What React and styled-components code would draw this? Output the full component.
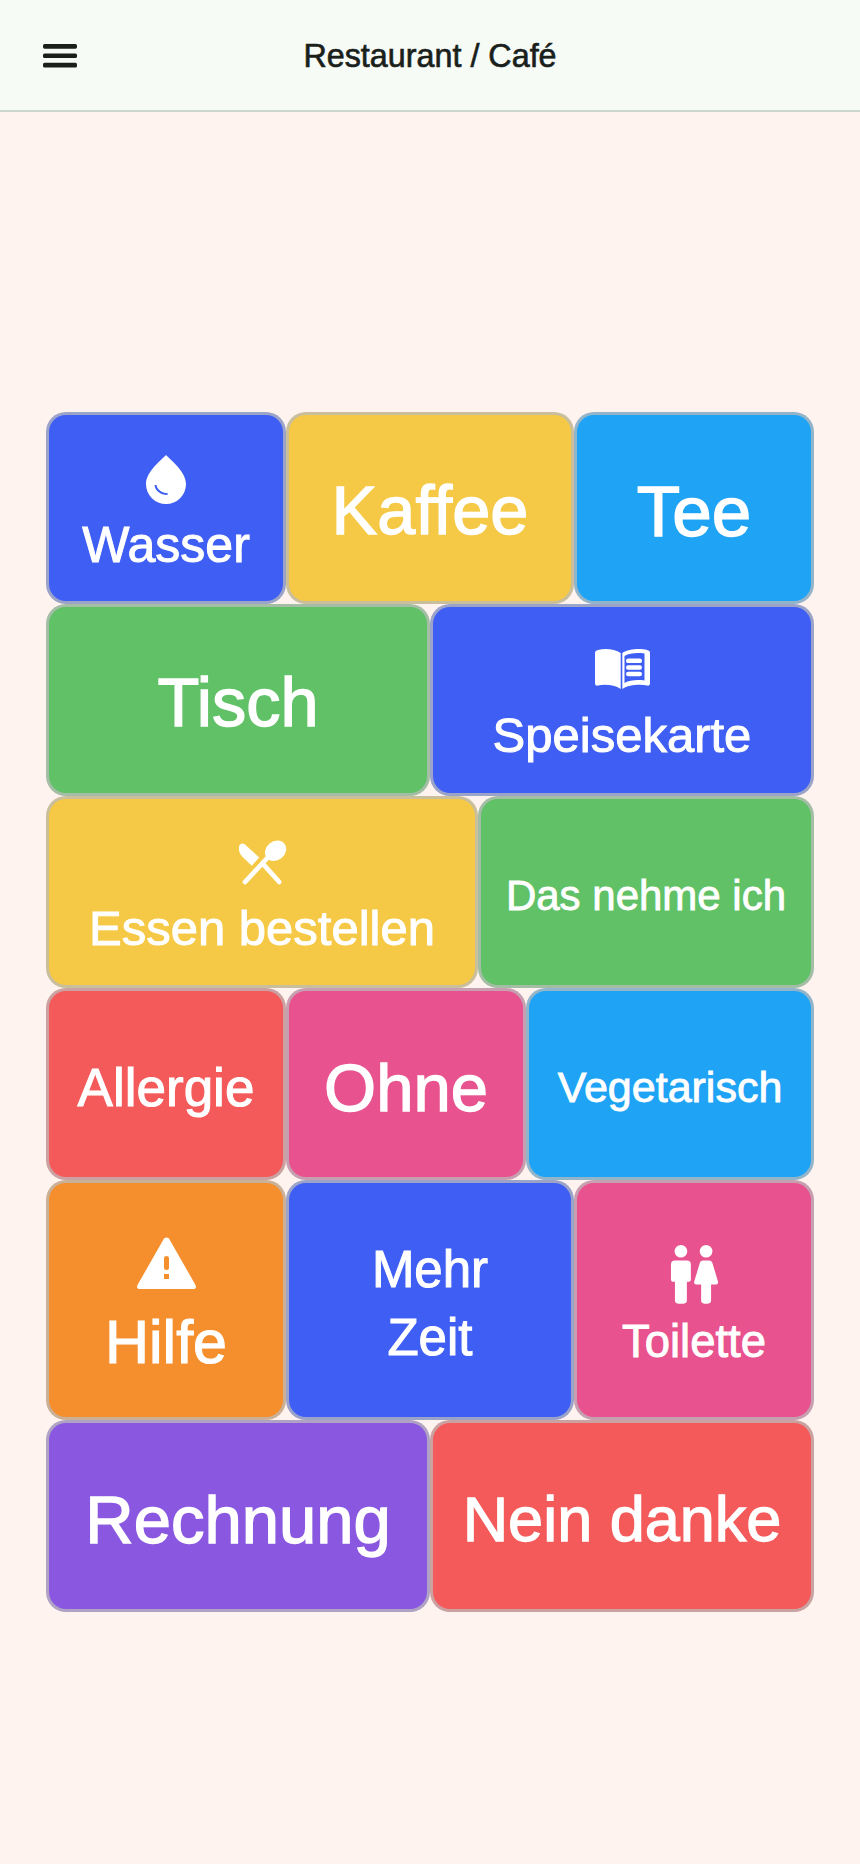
import React from 'react'
import styled, { createGlobalStyle } from 'styled-components'

const GlobalStyle = createGlobalStyle`
  html, body {
    margin: 0;
    padding: 0;
    background: #fff3ef;
    font-family: "Liberation Sans", Arial, sans-serif;
  }
`

const Page = styled.div`
  width: 860px;
  height: 1864px;
  display: flex;
  flex-direction: column;
  background: #fff3ef;
`

const Header = styled.header`
  height: 110px;
  flex-shrink: 0;
  display: flex;
  align-items: center;
  justify-content: center;
  position: relative;
  background: #f6fbf6;
  border-bottom: 2px solid #cdd5d1;
`

const MenuButton = styled.button`
  position: absolute;
  left: 43px;
  top: 44px;
  padding: 0;
  border: none;
  background: none;
  color: #1a1f1c;
  display: flex;
`

const Title = styled.h1`
  margin: 3px 0 0;
  font-size: 32.3px;
  font-weight: 400;
  color: #1a1f1c;
  -webkit-text-stroke: 0.02em currentColor;
`

const Main = styled.main`
  flex: 1;
  padding-top: 48px;
  display: flex;
  align-items: center;
  justify-content: center;
`

const Board = styled.div`
  display: grid;
  grid-template-columns: repeat(16, 48px);
  grid-template-rows: repeat(4, 192px) 240px 192px;
`

const Tile = styled.button`
  grid-column: span ${(p) => p.$span};
  display: flex;
  flex-direction: column;
  align-items: center;
  justify-content: center;
  padding: ${(p) => (p.$hasIcon ? 8 : 7)}px 0 0;
  border: 3px solid rgba(187, 187, 187, 0.75);
  border-radius: 20px;
  background: ${(p) => p.$bg};
  color: #fff;
  font-family: inherit;
  font-size: ${(p) => p.$size}px;
  line-height: ${(p) => p.$leading || '1'};
  text-align: center;
  -webkit-text-stroke: 0.02em currentColor;
`

const IconSlot = styled.span`
  display: flex;
  margin-bottom: ${(p) => p.$gap}px;
  -webkit-text-stroke: 0;
`

const blue = '#3f5ef3'
const yellow = '#f5c945'
const sky = '#1fa3f5'
const green = '#60c166'
const red = '#f55a5a'
const pink = '#e8528e'
const orange = '#f58e2c'
const purple = '#8a58e0'

function MenuIcon() {
  return (
    <svg width="34" height="24" viewBox="0 0 34 24" fill="currentColor">
      <rect y="0" width="34" height="4.7" rx="1.6" />
      <rect y="9.4" width="34" height="4.7" rx="1.6" />
      <rect y="18.8" width="34" height="4.7" rx="1.6" />
    </svg>
  )
}

function DropIcon() {
  return (
    <svg width="40" height="49" viewBox="0 0 40 49" fill="currentColor" fillRule="evenodd">
      <path d="M20 0C14 6 0 17 0 29a20 20 0 0 0 40 0C40 17 26 6 20 0zM8.5 30c.5 5.5 5.5 10 13 10l.3-1.8c-6-.3-10.5-3.5-11.3-8.2z" />
    </svg>
  )
}

function BookIcon() {
  return (
    <svg width="55" height="41" viewBox="0 0 55 41" fill="currentColor" fillRule="evenodd">
      <path d="M3 2C10 0 20 1 25.7 5V41C20 37 10 36 3 37.5 1 38 0 37 0 35V5Q0 2.5 3 2z" />
      <path d="M27.3 5C33 1 45 0 52 2 54 2.5 55 3 55 5V35C55 37 54 38 52 37.5 45 36 33 37 27.3 41zM29.5 8V35C35 32 42 31.5 49.5 32.5V5.5C42 4.5 35 5 29.5 8z" />
      <rect x="31" y="10.5" width="16" height="4.6" rx="2.2" />
      <rect x="31" y="17.2" width="16" height="4.6" rx="2.2" />
      <rect x="31" y="23.7" width="16" height="4.6" rx="2.2" />
    </svg>
  )
}

function CutleryIcon() {
  return (
    <svg width="52" height="47" viewBox="19 15 155 140" fill="currentColor">
      <ellipse cx="137" cy="50" rx="34" ry="28" transform="rotate(-40 137 50)" />
      <line x1="112" y1="72" x2="46" y2="143" stroke="currentColor" strokeWidth="14" strokeLinecap="round" />
      <path d="M28 38Q32 24 44 30L88 70 66 95 38 68Q26 55 28 38z" />
      <line x1="102" y1="92" x2="148" y2="143" stroke="currentColor" strokeWidth="14" strokeLinecap="round" />
    </svg>
  )
}

function WarningIcon() {
  return (
    <svg width="61" height="54" viewBox="-1 -1 61 54" fill="currentColor" fillRule="evenodd">
      <path d="M27 1.5Q29.5-.5 32 1.5L58.5 48Q60 52 56 52H3Q-1 52 .5 48zM27 21.5a2.5 2.5 0 0 1 5 0v9a2.5 2.5 0 0 1-5 0zM27 37h5v5h-5z" />
    </svg>
  )
}

function ToiletIcon() {
  return (
    <svg width="51" height="61" viewBox="30 8 152 184" fill="currentColor">
      <circle cx="65" cy="30" r="19" />
      <circle cx="141" cy="30" r="19" />
      <path d="M47 58H83Q95 58 95 70V116Q95 122 89 122H83V178Q83 188 73 188H57Q47 188 47 178V122H41Q35 122 35 116V70Q35 58 47 58z" />
      <path d="M132 58H150Q158 58 161 68L177 122Q178 130 171 130H156V178Q156 188 146 188H136Q126 188 126 178V130H111Q104 130 105 122L121 68Q124 58 132 58z" />
    </svg>
  )
}

const tiles = [
  { label: 'Wasser', span: 5, bg: blue, size: 50, icon: <DropIcon />, gap: 16 },
  { label: 'Kaffee', span: 6, bg: yellow, size: 68.5 },
  { label: 'Tee', span: 5, bg: sky, size: 71 },
  { label: 'Tisch', span: 8, bg: green, size: 68.5 },
  { label: 'Speisekarte', span: 8, bg: blue, size: 49, icon: <BookIcon />, gap: 22 },
  { label: 'Essen bestellen', span: 9, bg: yellow, size: 49, icon: <CutleryIcon />, gap: 18 },
  { label: 'Das nehme ich', span: 7, bg: green, size: 42 },
  { label: 'Allergie', span: 5, bg: red, size: 53 },
  { label: 'Ohne', span: 5, bg: pink, size: 67 },
  { label: 'Vegetarisch', span: 6, bg: sky, size: 43 },
  { label: 'Hilfe', span: 5, bg: orange, size: 61, icon: <WarningIcon />, gap: 22 },
  { label: <>Mehr<br />Zeit</>, span: 6, bg: blue, size: 51, leading: '68px' },
  { label: 'Toilette', span: 5, bg: pink, size: 45.5, icon: <ToiletIcon />, gap: 14 },
  { label: 'Rechnung', span: 8, bg: purple, size: 67 },
  { label: 'Nein danke', span: 8, bg: red, size: 63 },
]

export default function App() {
  return (
    <>
      <GlobalStyle />
      <Page>
        <Header>
          <MenuButton aria-label="Menü">
            <MenuIcon />
          </MenuButton>
          <Title>Restaurant / Café</Title>
        </Header>
        <Main>
          <Board>
            {tiles.map((tile, i) => (
              <Tile
                key={i}
                $span={tile.span}
                $bg={tile.bg}
                $size={tile.size}
                $leading={tile.leading}
                $hasIcon={!!tile.icon}
              >
                {tile.icon && <IconSlot $gap={tile.gap}>{tile.icon}</IconSlot>}
                {tile.label}
              </Tile>
            ))}
          </Board>
        </Main>
      </Page>
    </>
  )
}
